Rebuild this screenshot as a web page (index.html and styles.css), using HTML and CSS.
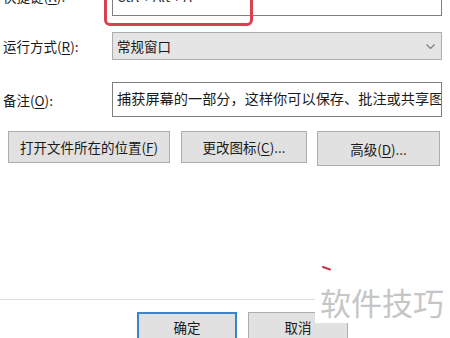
FILE: index.html
```html
<!DOCTYPE html>
<html lang="zh-CN">

<head>
    <meta charset="UTF-8">
    <meta name="viewport" content="width=device-width, initial-scale=1.0">
    <link rel="stylesheet" href="styles.css">
</head>

<body>

    <div class="dialog">
        <div class="form">
            <div class="row row-hotkey">
                <label class="label">快捷键(<u>K</u>):</label>
                <div class="field">Ctrl + Alt + A</div>
                <div class="mark-box"></div>
            </div>

            <div class="row row-run">
                <label class="label">运行方式(<u>R</u>):</label>
                <div class="select">
                    <span>常规窗口</span>
                    <svg class="chevron" width="9" height="5" viewBox="0 0 9 5">
                        <path d="M0.5 0.5 L4.5 4.5 L8.5 0.5" fill="none" stroke="#7a7a7a" stroke-width="1.1"/>
                    </svg>
                </div>
            </div>

            <div class="row row-note">
                <label class="label">备注(<u>O</u>):</label>
                <div class="field field-note">捕获屏幕的一部分，这样你可以保存、批注或共享图像。</div>
            </div>
        </div>

        <div class="actions">
            <button class="btn btn-open" type="button">打开文件所在的位置(<u>F</u>)</button>
            <button class="btn btn-icon" type="button">更改图标(<u>C</u>)...</button>
            <button class="btn btn-adv" type="button">高级(<u>D</u>)...</button>
        </div>

        <div class="footer">
            <button class="btn btn-ok" type="button">确定</button>
            <button class="btn btn-cancel" type="button">取消</button>
        </div>
    </div>

    <!-- 水印 -->
    <svg class="red-tick" width="10" height="5" viewBox="0 0 10 5">
        <path d="M1 1 L8 3.5" stroke="#c23845" stroke-width="2" stroke-linecap="round"/>
    </svg>
    <div class="watermark">软件技巧</div>

</body>

</html>
```

FILE: styles.css
```css
body {
    margin: 0;
    background-color: #fff;
    font-family: "Noto Sans CJK SC", "Noto Sans", sans-serif;
    font-size: 13.5px;
    color: #1a1a1a;
    height: 338px;
    overflow: hidden;
    position: relative;
}

.dialog {
    margin-top: -18px;
}

.form {
    padding-left: 3px;
}

.row {
    display: flex;
    align-items: center;
    position: relative;
}

.label {
    width: 109px;
    flex-shrink: 0;
}

u {
    text-decoration-thickness: 1px;
    text-underline-offset: 2px;
}

.field {
    width: 330px;
    height: 28px;
    border: 1px solid #7f7f7f;
    background-color: #fff;
    padding-left: 4px;
    box-sizing: border-box;
    line-height: 26px;
    white-space: nowrap;
    overflow: hidden;
}

.row-hotkey {
    align-items: flex-start;
}

.row-hotkey .label {
    line-height: 28px;
}

.row-hotkey .field {
    height: 34px;
    line-height: 26px;
    color: #333;
}

.mark-box {
    position: absolute;
    left: 101px;
    top: 0;
    width: 149px;
    height: 44px;
    border: 3px solid #d8414f;
    border-radius: 6px;
    box-sizing: border-box;
}

.row-run {
    margin-top: 16px;
}

.select {
    width: 330px;
    height: 28px;
    box-sizing: border-box;
    border: 1px solid #adadad;
    background-color: #e5e5e5;
    display: flex;
    align-items: center;
    justify-content: space-between;
    padding: 0 6px 0 4px;
}

.chevron {
    margin-top: 1px;
}

.row-note {
    margin-top: 22px;
}

.field-note {
    height: 35px;
    line-height: 31px;
    font-size: 14.2px;
}

.actions {
    display: flex;
    align-items: flex-start;
    margin-top: 14px;
    padding-left: 8px;
}

.btn {
    font-family: "Noto Sans CJK SC", "Noto Sans", sans-serif;
    font-size: 13.5px;
    color: #1a1a1a;
    background-color: #e1e1e1;
    border: 1px solid #adadad;
    padding: 0;
    height: 32px;
    box-sizing: border-box;
}

.btn-open {
    width: 162px;
}

.btn-icon {
    width: 126px;
    margin-left: 11px;
}

.btn-adv {
    width: 123px;
    height: 35px;
    margin-left: 10px;
}

.footer {
    margin-top: 133px;
    border-top: 1px solid #dedede;
    padding: 12px 0 0 137px;
    display: flex;
}

.btn-ok {
    width: 100px;
    height: 30px;
    border: 2px solid #3d84c6;
}

.btn-cancel {
    width: 100px;
    height: 30px;
    margin-left: 11px;
}

.red-tick {
    position: absolute;
    left: 322px;
    top: 266px;
}

.watermark {
    position: absolute;
    left: 315px;
    top: 283px;
    width: 135px;
    height: 40px;
    background-color: #fff;
    color: #c6c6c6;
    font-size: 31px;
    line-height: 38px;
    padding-left: 5px;
    box-sizing: border-box;
    white-space: nowrap;
}
```
